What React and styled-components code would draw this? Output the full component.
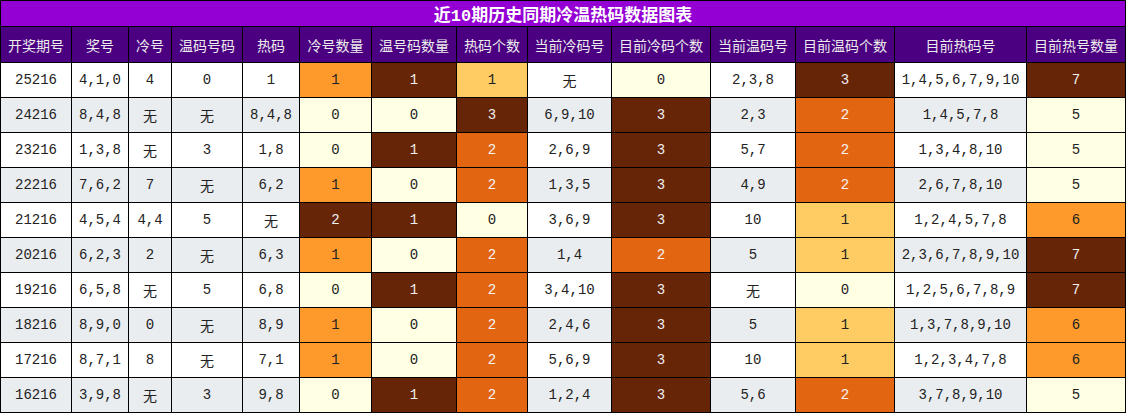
import React from 'react';
import styled, { createGlobalStyle } from 'styled-components';

const GlobalStyle = createGlobalStyle`
  html, body {
    margin: 0;
    padding: 0;
    background: #ffffff;
  }
`

const COLS = [70, 56, 42, 70, 56, 71, 84, 70, 83, 98, 84, 98, 131, 98];

const SHADES = {
  ly: { bg: '#ffffe3', fg: '#222222' },
  lo: { bg: '#fecc63', fg: '#222222' },
  or: { bg: '#fe9a2b', fg: '#222222' },
  do: { bg: '#e26612', fg: '#f4f4f4' },
  br: { bg: '#662507', fg: '#f0f0f0' },
};

const Board = styled.div`
  display: grid;
  grid-template-columns: ${COLS.map((w) => w + 'px').join(' ')};
  grid-template-rows: 25px 35px repeat(10, 34px);
  gap: 1px;
  padding: 1px;
  width: 1126px;
  box-sizing: border-box;
  background: #000000;
`

const Title = styled.div`
  grid-column: 1 / -1;
  display: flex;
  align-items: center;
  justify-content: center;
  background: #9400d3;
  color: #ffffff;
  font-family: "Liberation Mono", "Noto Sans CJK SC", monospace;
  font-size: 17px;
  font-weight: bold;
`

const HeadCell = styled.div`
  display: flex;
  align-items: center;
  justify-content: center;
  background: #4b0082;
  color: #ececec;
  font-family: "Noto Sans CJK SC", "Noto Sans", sans-serif;
  font-size: 14px;
  white-space: nowrap;
`

const Cell = styled.div`
  display: flex;
  align-items: center;
  justify-content: center;
  background: ${(p) => p.$bg};
  color: ${(p) => p.$fg};
  font-family: "Liberation Mono", "Noto Sans CJK SC", monospace;
  font-size: 14px;
  white-space: nowrap;
`

const HEADERS = [
  '开奖期号', '奖号', '冷号', '温码号码', '热码', '冷号数量', '温号码数量',
  '热码个数', '当前冷码号', '目前冷码个数', '当前温码号', '目前温码个数',
  '目前热码号', '目前热号数量',
];

// plain cells are strings, shaded cells are [value, shade]
const ROWS = [
  ['25216', '4,1,0', '4', '0', '1', ['1', 'or'], ['1', 'br'], ['1', 'lo'], '无', ['0', 'ly'], '2,3,8', ['3', 'br'], '1,4,5,6,7,9,10', ['7', 'br']],
  ['24216', '8,4,8', '无', '无', '8,4,8', ['0', 'ly'], ['0', 'ly'], ['3', 'br'], '6,9,10', ['3', 'br'], '2,3', ['2', 'do'], '1,4,5,7,8', ['5', 'ly']],
  ['23216', '1,3,8', '无', '3', '1,8', ['0', 'ly'], ['1', 'br'], ['2', 'do'], '2,6,9', ['3', 'br'], '5,7', ['2', 'do'], '1,3,4,8,10', ['5', 'ly']],
  ['22216', '7,6,2', '7', '无', '6,2', ['1', 'or'], ['0', 'ly'], ['2', 'do'], '1,3,5', ['3', 'br'], '4,9', ['2', 'do'], '2,6,7,8,10', ['5', 'ly']],
  ['21216', '4,5,4', '4,4', '5', '无', ['2', 'br'], ['1', 'br'], ['0', 'ly'], '3,6,9', ['3', 'br'], '10', ['1', 'lo'], '1,2,4,5,7,8', ['6', 'or']],
  ['20216', '6,2,3', '2', '无', '6,3', ['1', 'or'], ['0', 'ly'], ['2', 'do'], '1,4', ['2', 'do'], '5', ['1', 'lo'], '2,3,6,7,8,9,10', ['7', 'br']],
  ['19216', '6,5,8', '无', '5', '6,8', ['0', 'ly'], ['1', 'br'], ['2', 'do'], '3,4,10', ['3', 'br'], '无', ['0', 'ly'], '1,2,5,6,7,8,9', ['7', 'br']],
  ['18216', '8,9,0', '0', '无', '8,9', ['1', 'or'], ['0', 'ly'], ['2', 'do'], '2,4,6', ['3', 'br'], '5', ['1', 'lo'], '1,3,7,8,9,10', ['6', 'or']],
  ['17216', '8,7,1', '8', '无', '7,1', ['1', 'or'], ['0', 'ly'], ['2', 'do'], '5,6,9', ['3', 'br'], '10', ['1', 'lo'], '1,2,3,4,7,8', ['6', 'or']],
  ['16216', '3,9,8', '无', '3', '9,8', ['0', 'ly'], ['1', 'br'], ['2', 'do'], '1,2,4', ['3', 'br'], '5,6', ['2', 'do'], '3,7,8,9,10', ['5', 'ly']],
];

export default function App() {
  return (
    <>
      <GlobalStyle />
      <Board>
        <Title>近10期历史同期冷温热码数据图表</Title>
        {HEADERS.map((h) => (
          <HeadCell key={h}>{h}</HeadCell>
        ))}
        {ROWS.map((row, r) =>
          row.map((c, i) => {
            if (Array.isArray(c)) {
              const s = SHADES[c[1]];
              return <Cell key={r + '-' + i} $bg={s.bg} $fg={s.fg}>{c[0]}</Cell>;
            }
            return (
              <Cell key={r + '-' + i} $bg={r % 2 ? '#eaedf0' : '#ffffff'} $fg="#222222">
                {c}
              </Cell>
            );
          })
        )}
      </Board>
    </>
  );
}
